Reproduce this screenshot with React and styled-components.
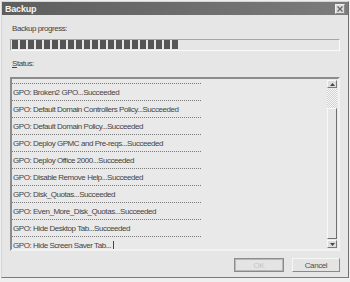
import styled, { createGlobalStyle } from 'styled-components';

const GlobalStyle = createGlobalStyle`
    html, body {
        margin: 0;
        padding: 0;
        background: #efefef;
    }
    body {
        font-family: "Liberation Sans", Arial, sans-serif;
    }
`;

const rows = [
    'GPO: Broken2 GPO...Succeeded',
    'GPO: Default Domain Controllers Policy...Succeeded',
    'GPO: Default Domain Policy...Succeeded',
    'GPO: Deploy GPMC and Pre-reqs...Succeeded',
    'GPO: Deploy Office 2000...Succeeded',
    'GPO: Disable Remove Help...Succeeded',
    'GPO: Disk_Quotas...Succeeded',
    'GPO: Even_More_Disk_Quotas...Succeeded',
    'GPO: Hide Desktop Tab...Succeeded',
    'GPO: Hide Screen Saver Tab...',
];

const Window = styled.div`
    width: 346px;
    height: 275px;
    margin: 1px 0 0 1px;
    background: #e6e6e6;
    border: 1px solid #d6d6d6;
    border-right-color: #6e6e6e;
    border-bottom-color: #7a7a7a;
    display: flex;
    flex-direction: column;
`;

const TitleBar = styled.div`
    height: 13px;
    padding: 0 3px 0 3px;
    background: linear-gradient(90deg, #5e5e5e 0%, #6c6c6c 50%, #7c7c7c 100%);
    display: flex;
    align-items: center;
    justify-content: space-between;
`;

const Title = styled.span`
    color: #f4f4f4;
    font-weight: bold;
    font-size: 9px;
    letter-spacing: -0.2px;
`;

const CloseButton = styled.div`
    width: 8px;
    height: 8px;
    background: #dcdcdc;
    border: 1px solid #f2f2f2;
    border-right-color: #8a8a8a;
    border-bottom-color: #8a8a8a;
    display: flex;
    align-items: center;
    justify-content: center;
`;

const Body = styled.div`
    flex: 1;
    padding: 0 8px 0 8px;
    display: flex;
    flex-direction: column;
`;

const Label = styled.div`
    font-size: 8px;
    letter-spacing: -0.45px;
    line-height: 10px;
    height: 10px;
    color: #444;
    padding-left: 2px;
    margin-top: ${(p) => p.$top}px;
`;

const ProgressFrame = styled.div`
    margin-top: 5px;
    height: 10px;
    border: 1px solid #a6a6a6;
    border-right-color: #fafafa;
    border-bottom-color: #fafafa;
    display: flex;
    gap: 2px;
    padding-left: 1px;
`;

const Block = styled.div`
    width: 6px;
    height: 9px;
    background: #555;
`;

const ListBox = styled.div`
    margin-top: 8px;
    height: 170px;
    border: 2px solid #8c8c8c;
    border-right-color: #f2f2f2;
    border-bottom-color: #f2f2f2;
    background: #e9e9e9;
    display: flex;
    overflow: hidden;
`;

const Items = styled.div`
    flex: 1;
    padding-top: 4px;
    overflow: hidden;
`;

const Item = styled.div`
    width: 188px;
    height: 16px;
    border-top: 1px dotted #7a7a7a;
    display: flex;
    align-items: center;
    padding-left: 1px;
    font-size: 8px;
    letter-spacing: -0.45px;
    color: #444;
    white-space: nowrap;
`;

const Caret = styled.span`
    display: inline-block;
    width: 0;
    height: 9px;
    border-left: 1px solid #444;
    margin-left: 2px;
`;

const ScrollBar = styled.div`
    width: 10px;
    margin-right: 1px;
    display: flex;
    flex-direction: column;
`;

const ArrowButton = styled.div`
    height: 8px;
    margin: 1px 0;
    background: #dedede;
    border: 1px solid #f6f6f6;
    border-right-color: #7a7a7a;
    border-bottom-color: #7a7a7a;
    display: flex;
    align-items: center;
    justify-content: center;
    box-sizing: border-box;
`;

const Track = styled.div`
    height: 19px;
    background-color: #f4f4f4;
    background-image: repeating-conic-gradient(#d2d2d2 0 25%, #f7f7f7 0 50%);
    background-size: 2px 2px;
`;

const Thumb = styled.div`
    flex: 1;
    background: #e6e6e6;
    border: 1px solid #f8f8f8;
    border-right-color: #707070;
    border-bottom-color: #707070;
`;

const Footer = styled.div`
    margin-top: 7px;
    display: flex;
    justify-content: flex-end;
    gap: 8px;
`;

const Button = styled.div`
    width: ${(p) => p.$w}px;
    height: 14px;
    box-sizing: border-box;
    border: 1px solid ${(p) => (p.$default ? '#8e8e8e' : '#f6f6f6')};
    border-right-color: #8a8a8a;
    border-bottom-color: #8a8a8a;
    box-shadow: ${(p) => (p.$default ? 'inset 0 0 0 1px #b8b8b8' : 'none')};
    background: #e4e4e4;
    display: flex;
    align-items: center;
    justify-content: center;
    font-size: 8px;
    letter-spacing: -0.4px;
    color: ${(p) => (p.$disabled ? '#c4c4c4' : '#505050')};
`;

const Arrow = ({ up }) => (
    <svg width="5" height="3" viewBox="0 0 5 3">
        <path d={up ? 'M0 3 L2.5 0 L5 3 Z' : 'M0 0 L5 0 L2.5 3 Z'} fill="#444" />
    </svg>
);

const App = () => {
    return (
        <>
            <GlobalStyle />
            <Window>
                <TitleBar>
                    <Title>Backup</Title>
                    <CloseButton>
                        <svg width="6" height="6" viewBox="0 0 6 6">
                            <path d="M0.5 0.5 L5.5 5.5 M5.5 0.5 L0.5 5.5" stroke="#666" strokeWidth="1.3" />
                        </svg>
                    </CloseButton>
                </TitleBar>
                <Body>
                    <Label $top={9}>Backup progress:</Label>
                    <ProgressFrame>
                        {Array.from({ length: 21 }).map((_, i) => (
                            <Block key={i} />
                        ))}
                    </ProgressFrame>
                    <Label $top={8}>
                        <u>S</u>tatus:
                    </Label>
                    <ListBox>
                        <Items>
                            {rows.map((r, i) => (
                                <Item key={i}>
                                    {r}
                                    {i === rows.length - 1 && <Caret />}
                                </Item>
                            ))}
                        </Items>
                        <ScrollBar>
                            <ArrowButton>
                                <Arrow up />
                            </ArrowButton>
                            <Track />
                            <Thumb />
                            <ArrowButton>
                                <Arrow />
                            </ArrowButton>
                        </ScrollBar>
                    </ListBox>
                    <Footer>
                        <Button $w={50} $default $disabled>
                            OK
                        </Button>
                        <Button $w={48}>Cancel</Button>
                    </Footer>
                </Body>
            </Window>
        </>
    );
};

export default App;
